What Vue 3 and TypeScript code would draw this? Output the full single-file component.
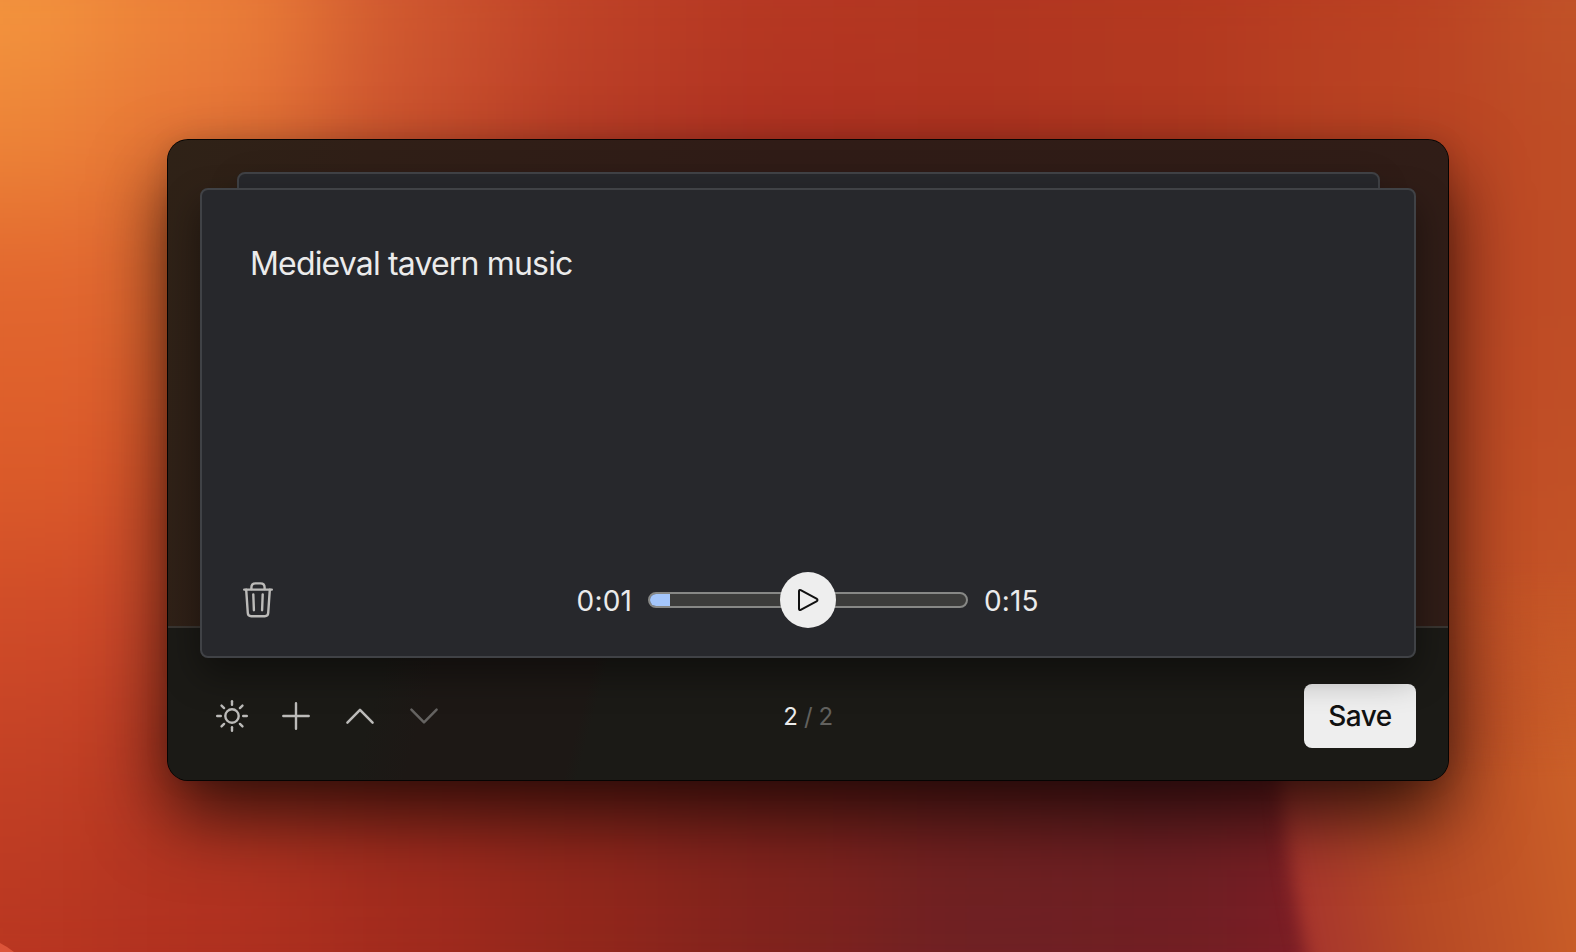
<script setup lang="ts">
import { ref, computed } from 'vue'

interface Patch {
  x: number
  y: number
  fill: string
}

const columns = [-40, 215, 432, 610, 788, 985, 1182, 1379, 1600]
const rows = [-20, 130, 300, 480, 640, 800, 960]
const palette: string[][] = [
  ['#f69b40', '#ee843a', '#cf5930', '#c04427', '#b63a23', '#b23821', '#b43920', '#b94022', '#c2562a'],
  ['#ee8638', '#e67537', '#ca502d', '#b83c26', '#b13222', '#af3320', '#b13820', '#b94222', '#c04e26'],
  ['#e1652e', '#df6630', '#c9502e', '#b83c26', '#b13222', '#af3320', '#b13820', '#bb4323', '#bf4d26'],
  ['#dc5c29', '#d6532b', '#c0402a', '#ae3322', '#a42e20', '#9c2c20', '#a83420', '#bc4624', '#c25126'],
  ['#cf4a28', '#c64529', '#b03323', '#9d2c20', '#8e281e', '#80241f', '#7c2020', '#bc4824', '#c65627'],
  ['#c24024', '#b33622', '#a02c1e', '#93281d', '#84241d', '#76221f', '#6e2023', '#821f22', '#c65627'],
  ['#b93621', '#af301f', '#a02a1d', '#90261b', '#7e221d', '#6b2024', '#6f1e23', '#7e1c26', '#c65627'],
]

const patches: Patch[] = rows.flatMap((y, r) =>
  columns.map((x, c) => ({ x: x - 110, y: y - 90, fill: palette[r][c] })),
)

const rays = [0, 45, 90, 135, 180, 225, 270, 315]
const prompt = ref('Medieval tavern music')
const current = ref(2)
const total = ref(2)
const elapsed = ref(1)
const duration = ref(15)

const clock = (s: number): string => `${Math.floor(s / 60)}:${String(s % 60).padStart(2, '0')}`
const progress = computed(() => `${(elapsed.value / duration.value) * 95}%`)
</script>

<template>
  <div class="desktop">
    <svg class="wallpaper" viewBox="0 0 1576 952" preserveAspectRatio="none">
      <defs>
        <filter id="soft" x="-300" y="-300" width="2200" height="1600" filterUnits="userSpaceOnUse" color-interpolation-filters="sRGB">
          <feGaussianBlur stdDeviation="64" />
        </filter>
        <filter id="edge" x="1100" y="300" width="800" height="900" filterUnits="userSpaceOnUse" color-interpolation-filters="sRGB">
          <feGaussianBlur stdDeviation="9" />
        </filter>
        <linearGradient id="petal" gradientUnits="userSpaceOnUse" x1="1284" y1="900" x2="1590" y2="850">
          <stop offset="0" stop-color="#a5342e" />
          <stop offset="0.14" stop-color="#aa3a2b" />
          <stop offset="0.4" stop-color="#b54825" />
          <stop offset="0.75" stop-color="#c25526" />
          <stop offset="1" stop-color="#cb6028" />
        </linearGradient>
        <linearGradient id="fade" gradientUnits="userSpaceOnUse" x1="0" y1="560" x2="0" y2="780">
          <stop offset="0" stop-color="#000" />
          <stop offset="1" stop-color="#fff" />
        </linearGradient>
        <mask id="petal-mask" maskUnits="userSpaceOnUse" x="1100" y="400" width="700" height="700">
          <rect x="1100" y="400" width="700" height="700" fill="url(#fade)" />
        </mask>
      </defs>
      <rect x="-300" y="-300" width="2200" height="1600" fill="#b03520" />
      <g filter="url(#soft)">
        <rect v-for="(p, i) in patches" :key="i" :x="p.x" :y="p.y" width="270" height="192" :fill="p.fill" />
      </g>
      <g mask="url(#petal-mask)">
        <path d="M1280 400 V760 Q1282 850 1316 1000 L1800 1000 V400 Z" fill="url(#petal)" filter="url(#edge)" />
      </g>
      <path d="M0 943 Q8 947 14 952 L0 952 Z" fill="#dc5439" />
    </svg>

    <main class="window">
      <section class="stage">
        <div class="card card-behind"></div>
        <article class="card card-front">
          <p class="prompt">{{ prompt }}</p>
          <div class="controls">
            <button class="icon-button trash" aria-label="Delete">
              <svg width="40" height="40" viewBox="0 0 40 40" fill="none" stroke="currentColor" stroke-width="2.4" stroke-linecap="round" stroke-linejoin="round">
                <path d="M6.2 9.6H33.8" />
                <path d="M13.4 9V7.6Q13.4 3.4 17.5 3.4H22.5Q26.6 3.4 26.6 7.6V9" />
                <path d="M8.2 9.8L9.8 33Q10 36.2 13.2 36.2H26.8Q30 36.2 30.2 33L31.8 9.8" />
                <path d="M15.3 14.4L15.9 30.2M24.7 14.4L24.1 30.2" />
              </svg>
            </button>
            <div class="player">
              <span class="time">{{ clock(elapsed) }}</span>
              <div class="track-wrap">
                <div class="track"><div class="fill" :style="{ width: progress }"></div></div>
                <button class="play" aria-label="Play">
                  <svg width="28" height="28" viewBox="0 0 28 28" fill="none" stroke="#111" stroke-width="2" stroke-linejoin="round">
                    <path d="M5 5.2Q5 3.4 6.7 4.2L22.5 12.7Q24.5 14 22.5 15.3L6.7 23.8Q5 24.6 5 22.8Z" />
                  </svg>
                </button>
              </div>
              <span class="time">{{ clock(duration) }}</span>
            </div>
          </div>
        </article>
      </section>

      <footer class="footer">
        <nav class="tools">
          <button class="icon-button" aria-label="Settings">
            <svg width="40" height="40" viewBox="0 0 40 40" fill="none" stroke="currentColor" stroke-width="2.4" stroke-linecap="round">
              <circle cx="20" cy="20" r="6.7" />
              <path v-for="a in rays" :key="a" d="M20 5.2V8.8" :transform="`rotate(${a} 20 20)`" />
            </svg>
          </button>
          <button class="icon-button" aria-label="Add">
            <svg width="40" height="40" viewBox="0 0 40 40" fill="none" stroke="currentColor" stroke-width="2.4" stroke-linecap="round">
              <path d="M20 7.3V32.7M7.3 20H32.7" />
            </svg>
          </button>
          <button class="icon-button" aria-label="Previous">
            <svg width="40" height="40" viewBox="0 0 40 40" fill="none" stroke="currentColor" stroke-width="2.5" stroke-linecap="round" stroke-linejoin="round">
              <path d="M7.4 26.6L20 13.8L32.6 26.6" />
            </svg>
          </button>
          <button class="icon-button dim" aria-label="Next">
            <svg width="40" height="40" viewBox="0 0 40 40" fill="none" stroke="currentColor" stroke-width="2.5" stroke-linecap="round" stroke-linejoin="round">
              <path d="M7.4 13.6L20 26.4L32.6 13.6" />
            </svg>
          </button>
        </nav>
        <div class="counter">{{ current }}<span class="total"> / {{ total }}</span></div>
        <button class="save">Save</button>
      </footer>
    </main>
  </div>
</template>

<style>
body {
  margin: 0;
  overflow: hidden;
}
</style>

<style scoped>
.desktop {
  position: relative;
  box-sizing: border-box;
  width: 1576px;
  height: 952px;
  padding: 140px 128px 172px 168px;
  overflow: hidden;
  font-family: Inter, "Liberation Sans", sans-serif;
  color: #ebebeb;
}
.wallpaper {
  position: absolute;
  inset: 0;
  width: 100%;
  height: 100%;
}
.window {
  position: relative;
  display: flex;
  flex-direction: column;
  width: 1280px;
  height: 640px;
  border-radius: 20px;
  background: #1b1a16;
  box-shadow: 0 0 0 1px #050403, 0 0 24px rgba(0, 0, 0, 0.1), 0 36px 76px rgba(0, 0, 0, 0.72);
}
.stage {
  position: relative;
  z-index: 1;
  box-sizing: border-box;
  height: 488px;
  padding: 48px 32px 0;
  border-bottom: 2px solid #393531;
  border-radius: 20px 20px 0 0;
  background: linear-gradient(100deg, #2f2217 0%, #301f17 15%, #301c17 45%, #301d17 100%);
}
.card {
  box-sizing: border-box;
  border: 2px solid #404246;
  border-radius: 8px;
  background: #27282c;
}
.card-behind {
  position: absolute;
  top: 32px;
  left: 68.5px;
  width: 1143px;
  height: 440px;
  background: #27282c;
  box-shadow: 0 8px 32px rgba(0, 0, 0, 0.15);
}
.card-front {
  position: relative;
  display: flex;
  flex-direction: column;
  justify-content: space-between;
  height: 470px;
  padding: 48px 36px 28px;
  box-shadow: 0 16px 36px rgba(0, 0, 0, 0.42);
}
.prompt {
  margin: 0 0 0 12px;
  font-size: 32px;
  line-height: 51px;
  letter-spacing: -0.83px;
}
.controls {
  display: grid;
  grid-template-columns: 1fr auto 1fr;
  align-items: center;
}
button {
  padding: 0;
  border: 0;
  background: none;
  font: inherit;
}
.icon-button {
  display: flex;
  width: 40px;
  height: 40px;
  color: #bcbbb9;
}
.dim {
  color: #656361;
}
.player {
  display: flex;
  align-items: center;
  gap: 16px;
}
.time {
  width: 56px;
  padding-top: 1px;
  font-size: 28px;
  line-height: 40px;
  letter-spacing: 0.15px;
}
.time:first-child {
  text-align: right;
}
.track-wrap {
  display: grid;
  place-items: center;
  width: 320px;
}
.track,
.play {
  grid-area: 1 / 1;
}
.track {
  box-sizing: border-box;
  width: 320px;
  height: 16px;
  overflow: hidden;
  border: 2px solid #878886;
  border-radius: 8px;
  background: #3c3c3b;
}
.fill {
  height: 100%;
  background: #a4c6fb;
}
.play {
  z-index: 1;
  display: grid;
  place-items: center;
  width: 56px;
  height: 56px;
  border-radius: 50%;
  background: #eeeeee;
}
.footer {
  display: grid;
  grid-template-columns: 1fr auto 1fr;
  align-items: center;
  box-sizing: border-box;
  height: 152px;
  padding: 24px 32px 0;
  border-radius: 0 0 20px 20px;
  background: linear-gradient(105deg, #1b1a16 0 17%, #1d1815 21% 33%, #1b1a16 34%);
}
.tools {
  display: flex;
  gap: 24px;
  padding-left: 12px;
}
.counter {
  padding-top: 2px;
  font-size: 24px;
  line-height: 32px;
  letter-spacing: -0.4px;
}
.total {
  color: #62615e;
}
.save {
  justify-self: end;
  width: 112px;
  height: 64px;
  border-radius: 8px;
  background: #eeeeee;
  color: #111111;
  font-size: 28px;
  font-weight: 500;
  letter-spacing: -0.5px;
}
</style>
